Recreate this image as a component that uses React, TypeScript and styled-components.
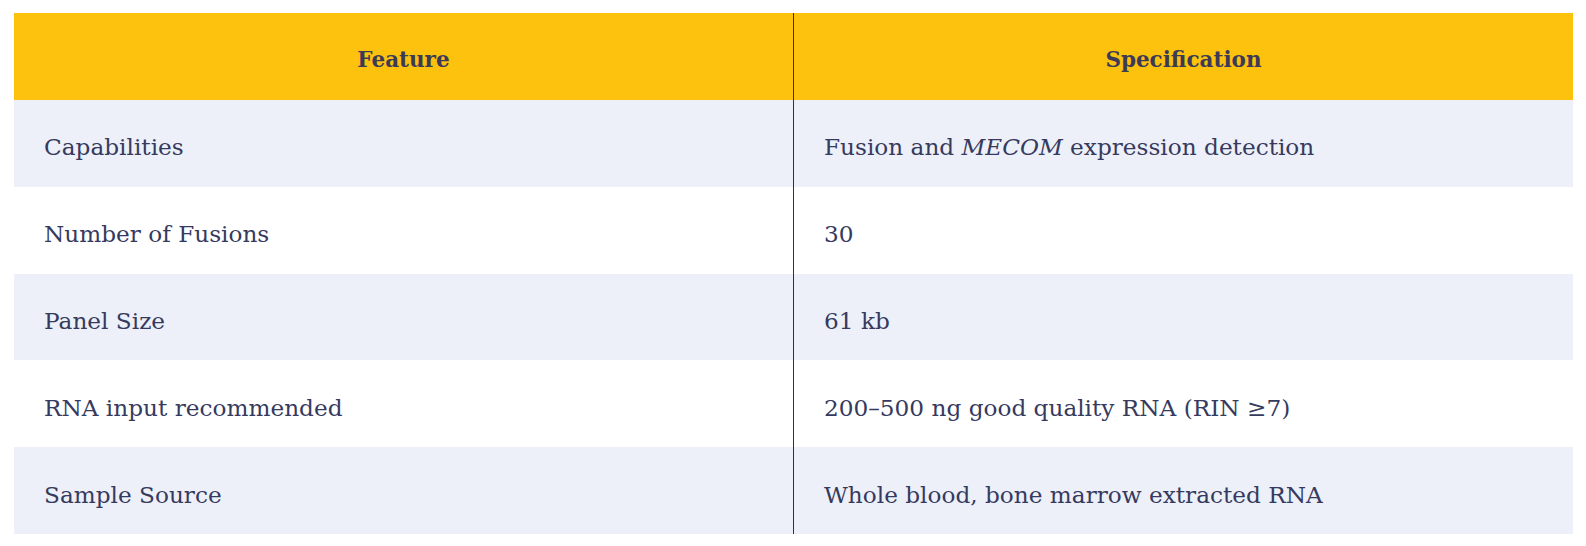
import React from 'react';
import styled, { createGlobalStyle } from 'styled-components';

const GlobalStyle = createGlobalStyle`
    body {
        margin: 0;
        background: #ffffff;
        font-family: 'DejaVu Serif', 'Liberation Serif', serif;
    }
`;

const Page = styled.div`
    padding: 13px 13px 0 14px;
`;

const Table = styled.div`
    display: grid;
    grid-template-columns: 779px 1px 779px;
    width: 1559px;
`;

const HeaderCell = styled.div`
    display: flex;
    align-items: center;
    justify-content: center;
    height: 87px;
    padding-top: 6px;
    box-sizing: border-box;
    background: #fcc20e;
    color: #3c3a57;
    font-weight: 700;
    font-size: 21.5px;
`;

const Divider = styled.div`
    background: #2f2d55;
`;

const Cell = styled.div<{ $shaded: boolean }>`
    display: flex;
    align-items: center;
    height: 86.8px;
    padding: 7px 0 0 30px;
    box-sizing: border-box;
    background: ${(p) => (p.$shaded ? '#edf0f8' : '#ffffff')};
    color: #363a5e;
    font-size: 23.2px;
    white-space: pre;
`;

const rows: { feature: string; spec: React.ReactNode }[] = [
    {
        feature: 'Capabilities',
        spec: (
            <>
                Fusion and <i>MECOM</i> expression detection
            </>
        ),
    },
    { feature: 'Number of Fusions', spec: '30' },
    { feature: 'Panel Size', spec: '61 kb' },
    { feature: 'RNA input recommended', spec: '200–500 ng good quality RNA (RIN ≥7)' },
    { feature: 'Sample Source', spec: 'Whole blood, bone marrow extracted RNA' },
];

export default function App() {
    return (
        <Page>
            <GlobalStyle />
            <Table>
                <HeaderCell>Feature</HeaderCell>
                <Divider />
                <HeaderCell>Specification</HeaderCell>
                {rows.map((row, i) => (
                    <React.Fragment key={row.feature}>
                        <Cell $shaded={i % 2 === 0}>{row.feature}</Cell>
                        <Divider />
                        <Cell $shaded={i % 2 === 0}>{row.spec}</Cell>
                    </React.Fragment>
                ))}
            </Table>
        </Page>
    );
}
